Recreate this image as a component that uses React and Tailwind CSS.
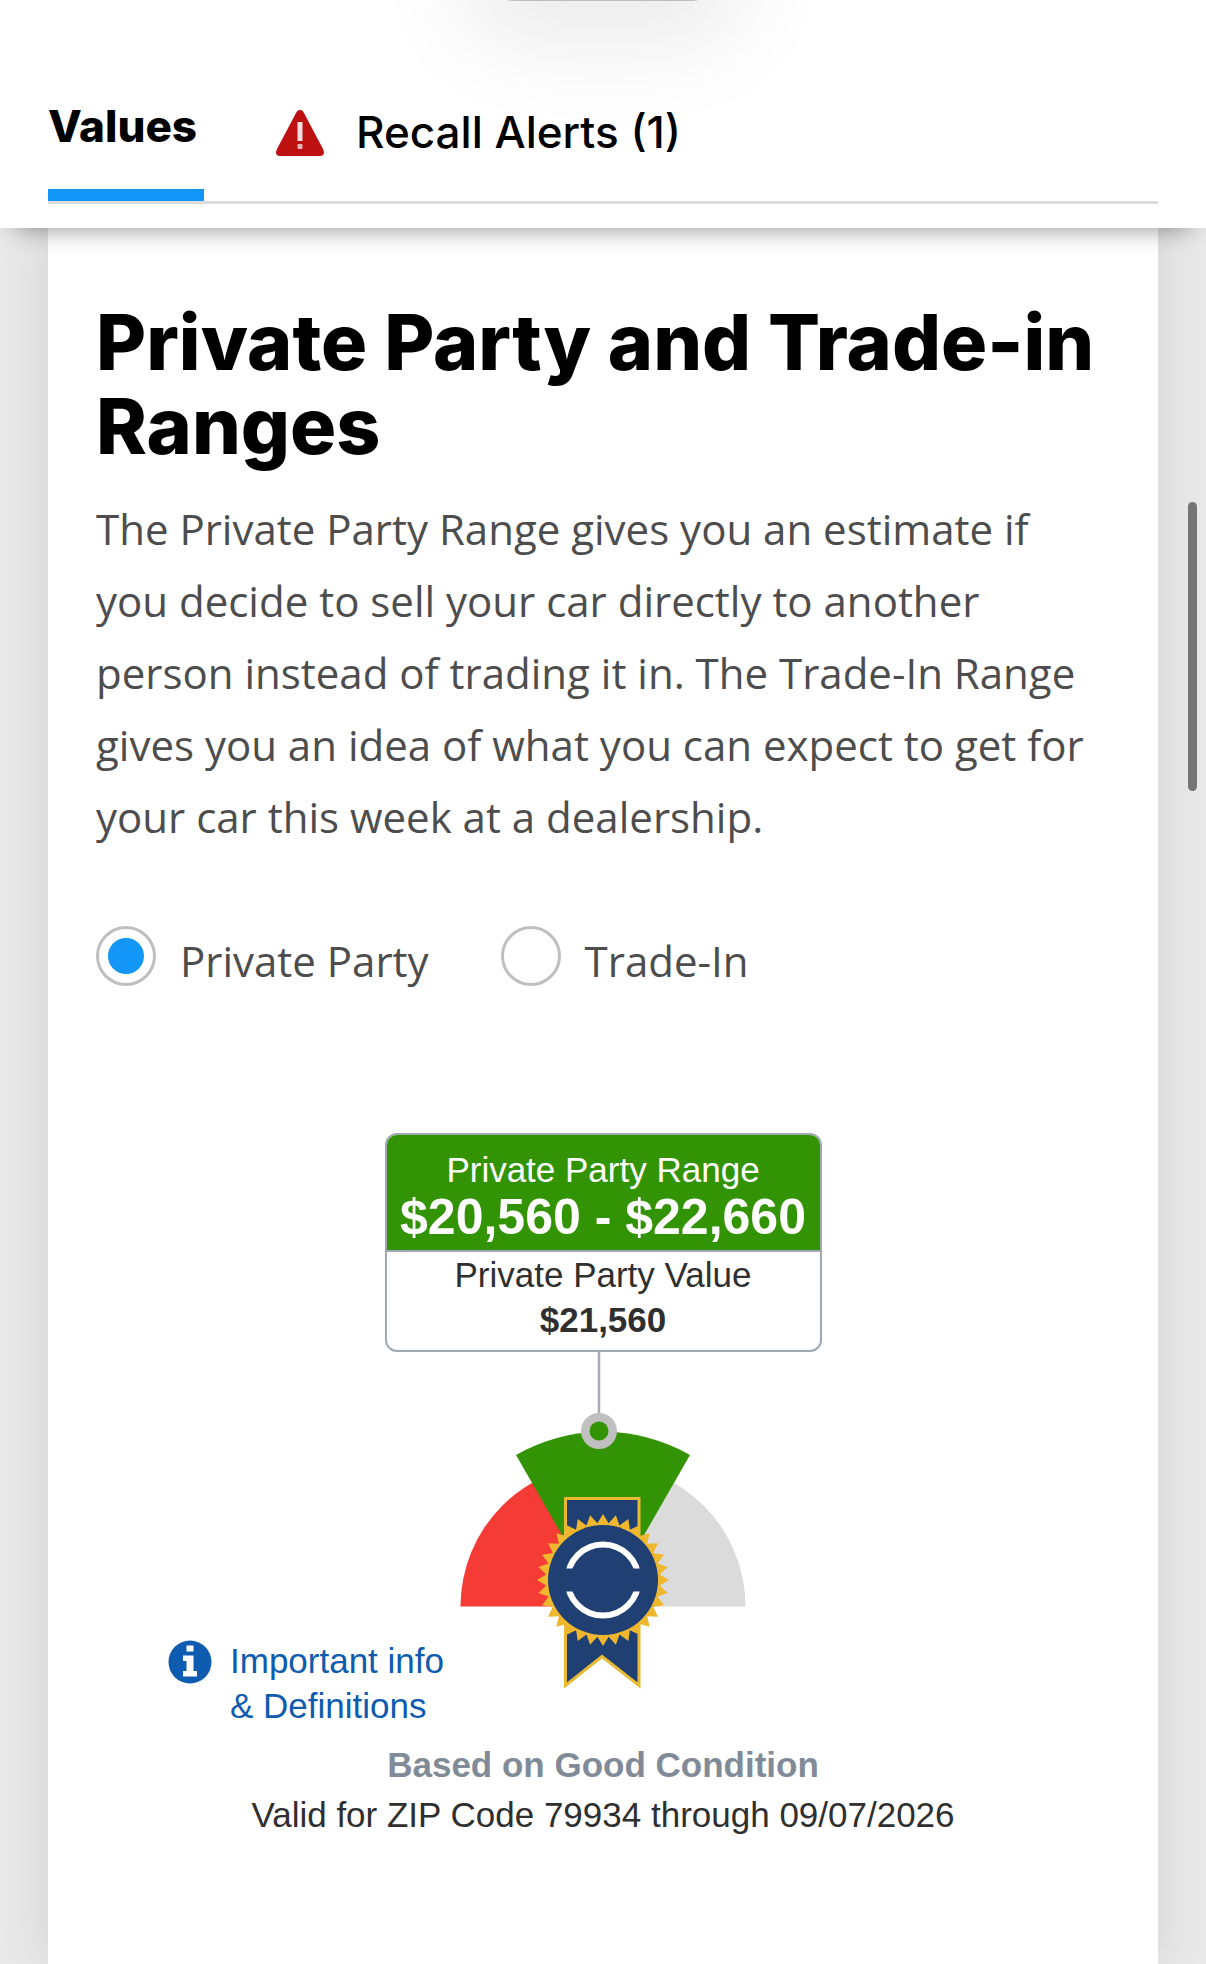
import { useState } from 'react'

const VALUES = {
  private: { label: 'Private Party', range: '$20,560 - $22,660', value: '$21,560' },
  trade: { label: 'Trade-In', range: '$18,210 - $20,140', value: '$19,175' },
}

// Star outline with 32 teeth around the badge
const teeth = Array.from({ length: 64 }, (_, i) => {
  const r = i % 2 === 0 ? 66 : 57
  const a = (i * Math.PI) / 32 - Math.PI / 2
  return `${(163 + r * Math.cos(a)).toFixed(1)},${(228 + r * Math.sin(a)).toFixed(1)}`
}).join(' ')

function WarningIcon() {
  return (
    <svg viewBox="0 0 48 46" className="w-12 h-[46px]" aria-hidden="true">
      <path d="M24 0c2 0 3 1 4 3l19 36c2 4 1 7-3 7H4c-4 0-5-3-3-7L20 3c1-2 2-3 4-3z" fill="#bd1010" />
      <path d="M21.5 12h5v19h-5z" fill="#f6dede" />
      <rect x="21.5" y="34" width="5" height="5" rx="1" fill="#e9b5b5" />
    </svg>
  )
}

function InfoIcon() {
  return (
    <svg viewBox="0 0 44 44" className="w-11 h-11 shrink-0" aria-hidden="true">
      <circle cx="22" cy="22" r="21.5" fill="#0e5bb0" />
      <path d="M18.5 5.500h7v6h-7zM15 15.500h10.500v15.500H29v5.500H15V31h3.500v-10H15z" fill="#fff" />
    </svg>
  )
}

function Gauge() {
  return (
    <svg viewBox="0 0 326 337" className="w-[326px] h-[337px]" role="img" aria-label="Value gauge">
      <clipPath id="ring">
        <path d="M110 170h106v46.500H110zM110 239.500h106v46.500H110z" />
      </clipPath>
      <path d="M20.500 254.500A142.500 142.500 0 0 1 163 112V254.500z" fill="#f43b36" />
      <path d="M163 112A142.500 142.500 0 0 1 305.500 254.500H163z" fill="#dbdbdb" />
      <path d="M163 254.500L76 103A175 175 0 0 1 250 103z" fill="#329404" />
      <path d="M159 0V64" stroke="#a5adb8" strokeWidth="2.500" />
      <circle cx="159" cy="79" r="18" fill="#c0c0c0" />
      <circle cx="159" cy="79" r="9.500" fill="#329404" />
      <path d="M125.500 146.500h73.500v187L162 304.500l-36.500 29z" fill="#203f73" stroke="#eab932" strokeWidth="3" />
      <polygon points={teeth} fill="#eeb72e" />
      <circle cx="163" cy="228" r="55" fill="#203f73" />
      <circle cx="163" cy="228" r="35.500" fill="none" stroke="#fff" strokeWidth="6" clipPath="url(#ring)" />
    </svg>
  )
}

function Radio({ id, label, checked, onChange }) {
  return (
    <div className="flex items-center gap-6">
      <input type="radio" id={id} name="valueType" checked={checked} onChange={onChange}
        className="appearance-none size-15 rounded-full border-3 border-[#bfbfbf] p-[9px] bg-clip-content checked:bg-[#1297f8]" />
      <label htmlFor={id} className="pt-2.5 leading-15">{label}</label>
    </div>
  )
}

export default function App() {
  const [type, setType] = useState('private')
  const current = VALUES[type]

  return (
    <div className="relative min-h-screen flex flex-col overflow-hidden bg-[#e9e9e9] font-['Open_Sans',sans-serif] text-[#4d4d4d]">
      <header className="relative z-10 bg-white px-12 pt-[84px] pb-6 shadow-[0_16px_24px_-16px_rgba(0,0,0,0.45)]">
        <div className="absolute left-1/2 -translate-x-1/2 -top-20 w-60 h-[81px] rounded-[32px] bg-[#bdbdbd] shadow-[0_16px_100px_20px_rgba(0,0,0,0.09)]" />
        <nav className="relative flex items-stretch gap-[72px] h-[120px] border-b-3 border-[#dcdcdc] font-['Inter',sans-serif] text-[44px] leading-[60px] text-black">
          <a href="#values" className="min-w-[156px] font-extrabold pt-3 border-b-12 border-[#1297f8]">Values</a>
          <a href="#recalls" className="flex items-start gap-8 pt-[18px] font-medium">
            <span className="pt-2"><WarningIcon /></span>
            Recall Alerts (1)
          </a>
        </nav>
      </header>

      <main className="mx-12 grow bg-white px-12 pt-[72px] pb-12 shadow-[0_0_48px_rgba(0,0,0,0.1)]">
        <h1 className="font-['Inter',sans-serif] font-extrabold text-[77px] leading-[84px] text-black">
          Private Party and Trade-in Ranges
        </h1>
        <p className="mt-[25px] text-[42px] leading-[72px]">
          The Private Party Range gives you an estimate if you decide to sell your car directly to another
          person instead of trading it in. The Trade-In Range gives you an idea of what you can expect to get for
          your car this week at a dealership.
        </p>

        <div className="flex gap-[72px] mt-[68px] text-[42px]">
          <Radio id="private" label="Private Party" checked={type === 'private'} onChange={() => setType('private')} />
          <Radio id="trade" label="Trade-In" checked={type === 'trade'} onChange={() => setType('trade')} />
        </div>

        <section className="flex flex-col items-center mt-[142px] font-['Liberation_Sans',sans-serif] text-[35px] leading-[45px] text-[#2f2f2f]">
          <div className="w-[437px] rounded-xl border-2 border-[#a0a8b3] overflow-hidden text-center">
            <div className="bg-[#329404] text-white pt-3 pb-2 border-b-2 border-[#a0a8b3]">
              <p>{current.label} Range</p>
              <p className="text-[50px] leading-[50px] font-bold">{current.range}</p>
            </div>
            <div className="pb-2">
              <p>{current.label} Value</p>
              <p className="font-bold">{current.value}</p>
            </div>
          </div>
          <div className="grid w-full">
            <div className="col-start-1 row-start-1 justify-self-center"><Gauge /></div>
            <a href="#definitions" className="col-start-1 row-start-1 justify-self-start self-end flex items-start gap-[18px] ml-[72px] mt-[286px] text-[#0e5bb0]">
              <span className="pt-0.5"><InfoIcon /></span>
              <span>Important info<br />&amp; Definitions</span>
            </a>
          </div>
          <p className="mt-3 leading-[50px] font-bold text-[#818b98]">Based on Good Condition</p>
          <p className="leading-[50px]">Valid for ZIP Code 79934 through 09/07/2026</p>
        </section>
      </main>

      <div className="absolute z-20 right-[9px] top-[502px] w-[9px] h-[289px] rounded-full bg-[#757575]" />
    </div>
  )
}
